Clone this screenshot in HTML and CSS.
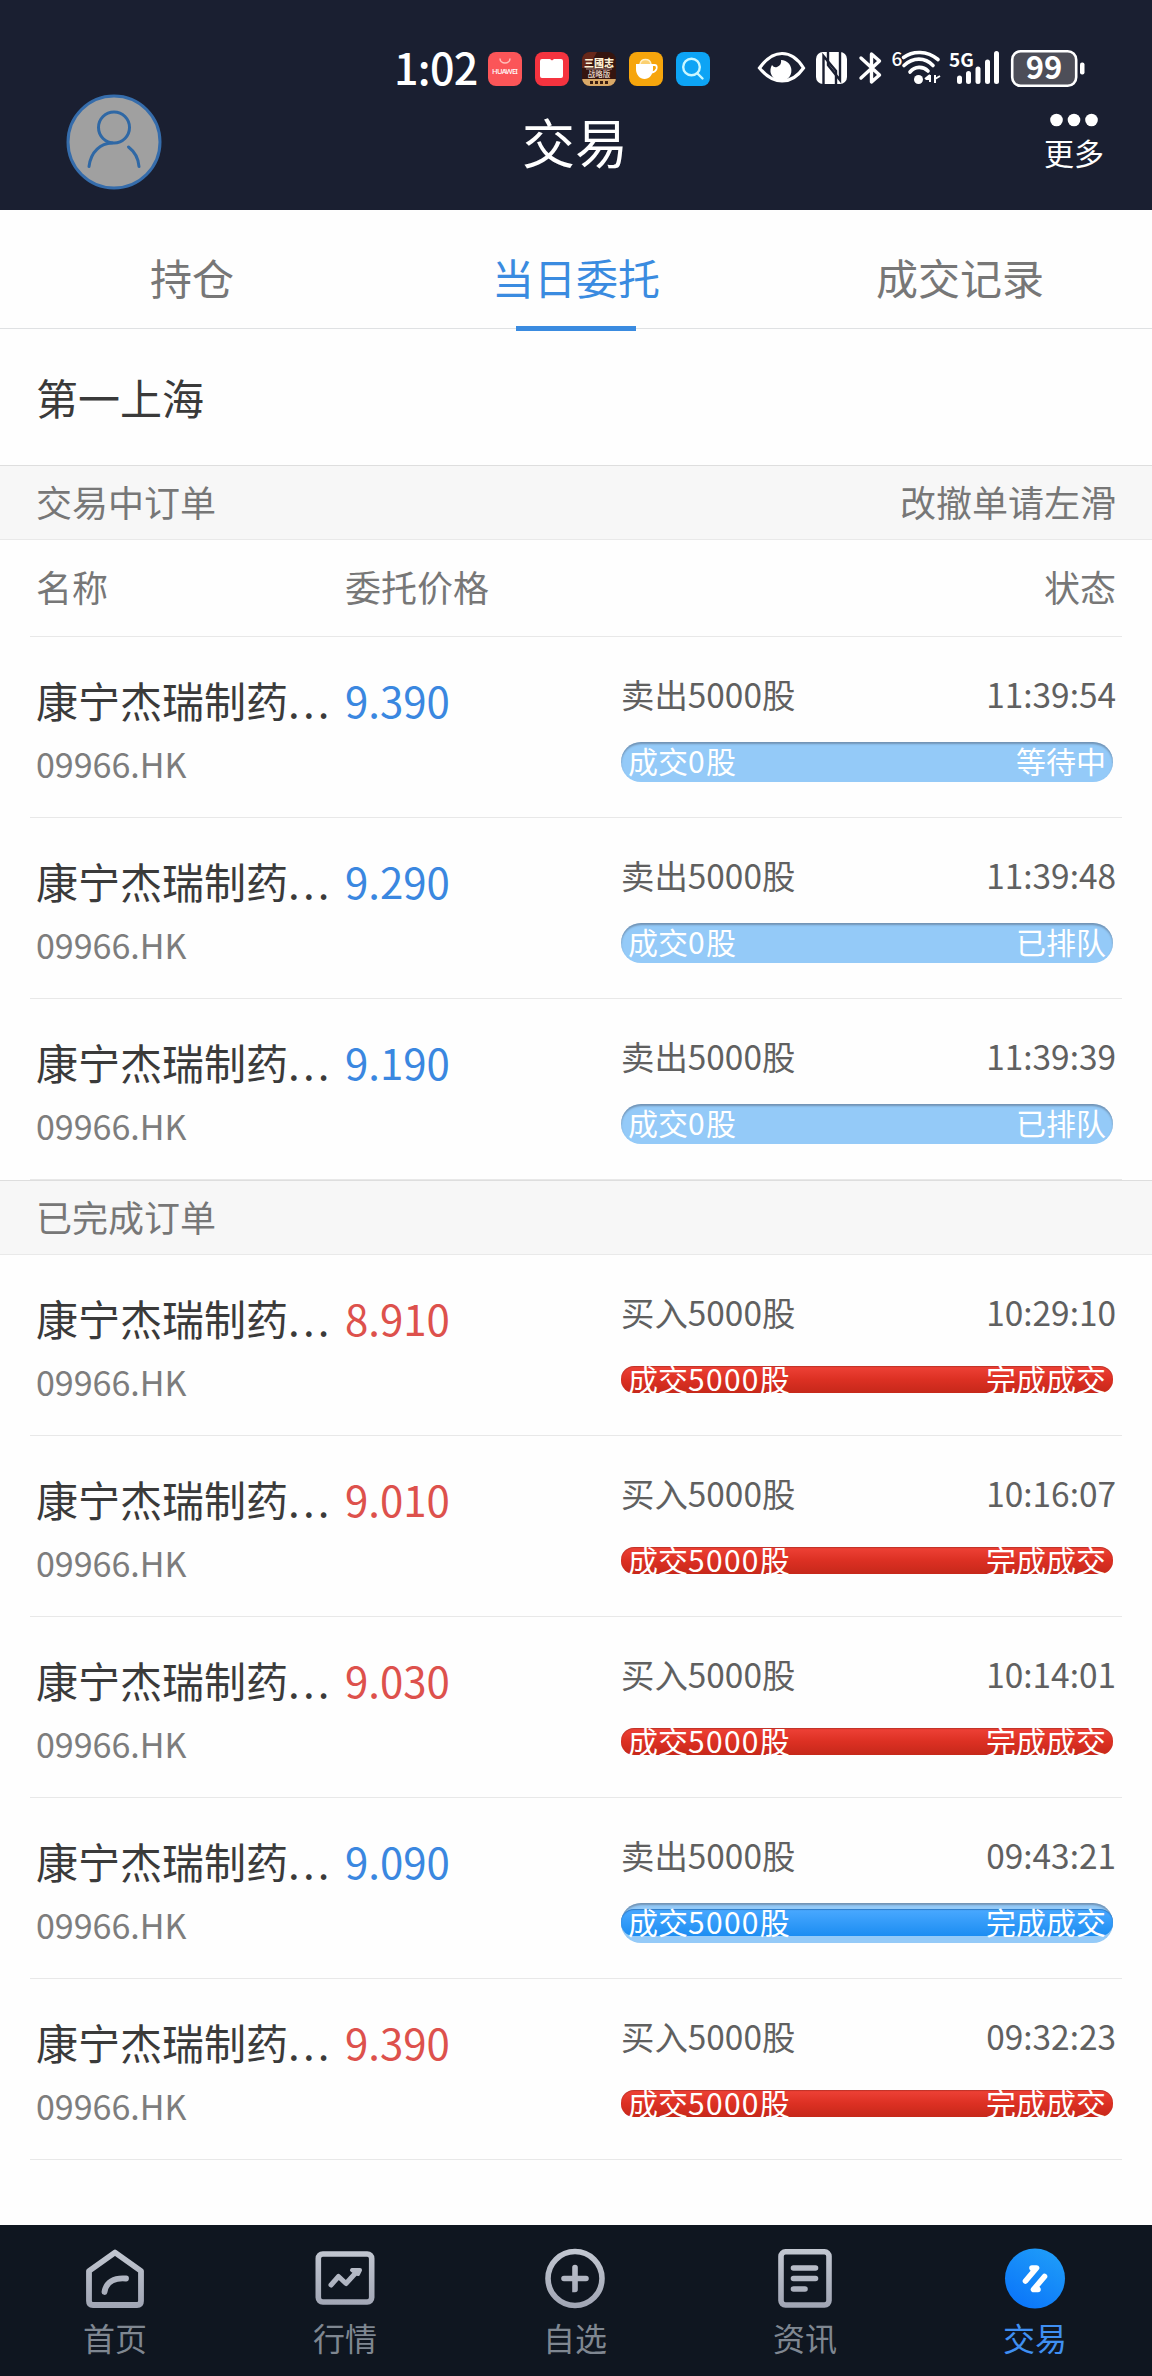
FILE: index.html
```html
<!DOCTYPE html>
<html lang="zh-CN">

<head>
	<meta charset="UTF-8" />
	<title>交易</title>
	<link rel="stylesheet" href="styles.css">
</head>

<body>
	<header class="top">
		<div class="status-bar">
			<span class="clock">1:02</span>
			<div class="app-icons">
				<svg viewBox="0 0 34 34">
					<rect width="34" height="34" rx="8" fill="#fb5558" />
					<path d="M12 6.500a5 4.500 0 0 0 10 0" fill="none" stroke="#ffc0bc" stroke-width="1.500" />
					<text x="17" y="21.500" text-anchor="middle" textLength="26" class="t-huawei">HUAWEI</text>
				</svg>
				<svg viewBox="0 0 34 34">
					<rect width="34" height="34" rx="8" fill="#f5333f" />
					<path d="M5 9q0-2 2-2h8l2 1.500 2-1.500h7q2 0 2 2v15q0 2-2 2H7q-2 0-2-2z" fill="#fff" />
				</svg>
				<svg viewBox="0 0 34 34">
					<defs>
						<clipPath id="gameClip"><rect width="34" height="34" rx="8" /></clipPath>
					</defs>
					<g clip-path="url(#gameClip)">
						<rect width="34" height="34" fill="#35150f" />
						<path d="M0 0h15L6 16H0z" fill="#68281a" />
						<rect y="27" width="34" height="7" fill="#d9a968" />
						<path d="M4 17h26" stroke="#b99" stroke-width="0.800" />
						<path d="M8 30.500h3m2 0h3m2 0h3m2 0h3" stroke="#3a1c10" stroke-width="3" />
					</g>
					<text x="17" y="14.500" text-anchor="middle" class="t-game">三國志</text>
					<text x="17" y="25" text-anchor="middle" class="t-game-sub">战略版</text>
				</svg>
				<svg viewBox="0 0 34 34">
					<rect width="34" height="34" rx="8" fill="#f6a50c" />
					<path d="M11 12c1-6 10-6 11 0" fill="#fbd070" stroke="#fff0c8" stroke-width="1.500" />
					<path d="M7 12h17v5c0 6-4 10-8.500 10S7 23 7 17z" fill="#fff" />
					<path d="M23 13h2.500q3 0 2 4-1 3-5 3.500" fill="none" stroke="#fff" stroke-width="1.800" />
				</svg>
				<svg viewBox="0 0 34 34">
					<rect width="34" height="34" rx="8" fill="#0da4f5" />
					<g fill="none" stroke="#c9f7ff" stroke-width="2.400" stroke-linecap="round">
						<circle cx="15.500" cy="15" r="8.300" />
						<path d="M21.500 21.500L26.500 26.500" />
					</g>
				</svg>
			</div>
			<!-- eye, nfc, bluetooth, wifi, signal, battery -->
			<svg class="sys-icons" viewBox="0 0 328 40" width="328" height="40">
				<path d="M2.500 20C9 11 16 5.500 25 5.500S41 11 46.500 20C41 28 34 33 25 33S9 28 2.500 20z" fill="none" stroke="#fff" stroke-width="3.200" />
				<path d="M24 12a10.500 10.500 0 1 1-9 5q2 3 5 2 5-2 4-7z" fill="#fff" />
				<rect x="59" y="4" width="31" height="32" rx="7" fill="#fff" />
				<g fill="none" stroke="#1a1f31" stroke-width="2.400">
					<path d="M66.500 36V8L79 23V36" />
					<path d="M83 4V32L71 17V4" />
				</g>
				<path d="M104 10L122.500 27L114.500 34V6L122.500 13L104 30" fill="none" stroke="#fff" stroke-width="3.400" stroke-linejoin="round" stroke-linecap="round" />
				<text x="134.500" y="18" class="t-six">6</text>
				<g fill="none" stroke="#fff" stroke-width="3.600" stroke-linecap="round">
					<path d="M146.500 9.500C156 2.500 170 2.500 181 11.500" />
					<path d="M147 17.500C156 9 168 9 176 17.500" />
					<path d="M153 24C158 18 166 18 171 23" />
				</g>
				<circle cx="161.500" cy="31.500" r="4.500" fill="#fff" />
				<path d="M173 27v7M168 31l5-4M169 31h4M178 27v8M178 31l5-3" stroke="#fff" stroke-width="2" />
				<text x="192" y="19" class="t-5g">5G</text>
				<g stroke="#fff" stroke-width="5" stroke-linecap="round">
					<path d="M202.500 30V33.500" />
					<path d="M211.500 25.500V33.500" />
					<path d="M221 21V33.500" />
					<path d="M230.500 14V33.500" />
					<path d="M239.500 5.500V33.500" />
				</g>
				<rect x="255.200" y="3.200" width="64" height="34.600" rx="8.500" fill="#4d4e58" stroke="#fff" stroke-width="2.600" />
				<text x="287" y="31" text-anchor="middle" class="t-battery">99</text>
				<rect x="323" y="14.500" width="4.500" height="12" rx="2" fill="#fff" />
			</svg>
		</div>

		<div class="title-bar">
			<svg class="avatar" viewBox="0 0 96 96">
				<circle cx="48" cy="48" r="46" fill="#a0a0a0" stroke="#356cab" stroke-width="3" />
				<g fill="none" stroke="#2f68a5" stroke-width="3" stroke-linecap="round">
					<circle cx="48" cy="33.500" r="15.500" />
					<path d="M23 72.500C25 57 35 49.500 46 49" />
					<path d="M62.500 53C69 58 72.500 65 73 72.500" />
				</g>
			</svg>
			<h1 class="title">交易</h1>
			<div class="more">
				<svg viewBox="0 0 50 14" width="50" height="14" fill="#fff">
					<circle cx="7.500" cy="7" r="6.300" />
					<circle cx="25" cy="7" r="6.300" />
					<circle cx="42.500" cy="7" r="6.300" />
				</svg>
				<span>更多</span>
			</div>
		</div>
	</header>

	<nav class="tabs">
		<a class="tab">持仓</a>
		<a class="tab active">当日委托</a>
		<a class="tab">成交记录</a>
	</nav>

	<main class="content">
		<div class="broker">第一上海</div>

		<div class="section-head">
			<span>交易中订单</span>
			<span>改撤单请左滑</span>
		</div>
		<div class="list">
			<div class="list-head">
				<span>名称</span>
				<span>委托价格</span>
				<span class="right">状态</span>
			</div>
			<div class="order sell">
				<div class="stock">
					<div class="name">康宁杰瑞制药<span class="dots">...</span></div>
					<div class="code">09966.HK</div>
				</div>
				<div class="price">9.390</div>
				<div class="detail">
					<div class="line"><span>卖出5000股</span><span>11:39:54</span></div>
					<div class="bar"><div class="bar-text"><span>成交<i>0</i>股</span><span>等待中</span></div></div>
				</div>
			</div>
			<div class="order sell">
				<div class="stock">
					<div class="name">康宁杰瑞制药<span class="dots">...</span></div>
					<div class="code">09966.HK</div>
				</div>
				<div class="price">9.290</div>
				<div class="detail">
					<div class="line"><span>卖出5000股</span><span>11:39:48</span></div>
					<div class="bar"><div class="bar-text"><span>成交<i>0</i>股</span><span>已排队</span></div></div>
				</div>
			</div>
			<div class="order sell">
				<div class="stock">
					<div class="name">康宁杰瑞制药<span class="dots">...</span></div>
					<div class="code">09966.HK</div>
				</div>
				<div class="price">9.190</div>
				<div class="detail">
					<div class="line"><span>卖出5000股</span><span>11:39:39</span></div>
					<div class="bar"><div class="bar-text"><span>成交<i>0</i>股</span><span>已排队</span></div></div>
				</div>
			</div>
		</div>

		<div class="section-head">
			<span>已完成订单</span>
		</div>
		<div class="list">
			<div class="order buy done">
				<div class="stock">
					<div class="name">康宁杰瑞制药<span class="dots">...</span></div>
					<div class="code">09966.HK</div>
				</div>
				<div class="price">8.910</div>
				<div class="detail">
					<div class="line"><span>买入5000股</span><span>10:29:10</span></div>
					<div class="bar"><div class="bar-text"><span>成交<i>5000</i>股</span><span>完成成交</span></div></div>
				</div>
			</div>
			<div class="order buy done">
				<div class="stock">
					<div class="name">康宁杰瑞制药<span class="dots">...</span></div>
					<div class="code">09966.HK</div>
				</div>
				<div class="price">9.010</div>
				<div class="detail">
					<div class="line"><span>买入5000股</span><span>10:16:07</span></div>
					<div class="bar"><div class="bar-text"><span>成交<i>5000</i>股</span><span>完成成交</span></div></div>
				</div>
			</div>
			<div class="order buy done">
				<div class="stock">
					<div class="name">康宁杰瑞制药<span class="dots">...</span></div>
					<div class="code">09966.HK</div>
				</div>
				<div class="price">9.030</div>
				<div class="detail">
					<div class="line"><span>买入5000股</span><span>10:14:01</span></div>
					<div class="bar"><div class="bar-text"><span>成交<i>5000</i>股</span><span>完成成交</span></div></div>
				</div>
			</div>
			<div class="order sell done">
				<div class="stock">
					<div class="name">康宁杰瑞制药<span class="dots">...</span></div>
					<div class="code">09966.HK</div>
				</div>
				<div class="price">9.090</div>
				<div class="detail">
					<div class="line"><span>卖出5000股</span><span>09:43:21</span></div>
					<div class="bar"><div class="bar-text"><span>成交<i>5000</i>股</span><span>完成成交</span></div></div>
				</div>
			</div>
			<div class="order buy done">
				<div class="stock">
					<div class="name">康宁杰瑞制药<span class="dots">...</span></div>
					<div class="code">09966.HK</div>
				</div>
				<div class="price">9.390</div>
				<div class="detail">
					<div class="line"><span>买入5000股</span><span>09:32:23</span></div>
					<div class="bar"><div class="bar-text"><span>成交<i>5000</i>股</span><span>完成成交</span></div></div>
				</div>
			</div>
		</div>
	</main>

	<nav class="bottom-nav">
		<a class="nav-item">
			<svg viewBox="0 0 60 60">
				<defs>
					<linearGradient id="grayGrad" x1="0" y1="0" x2="0" y2="60" gradientUnits="userSpaceOnUse">
						<stop offset="0" stop-color="#c3c8d2" />
						<stop offset="1" stop-color="#a0a5b4" />
					</linearGradient>
				</defs>
				<g fill="none" stroke="url(#grayGrad)" stroke-width="5.800" stroke-linejoin="round" stroke-linecap="round">
					<path d="M30 4.500L56 23V53Q56 57 52 57H8Q4 57 4 53V23z" />
					<path d="M19.500 44C21 34 29 29.500 41 30.500" />
				</g>
			</svg>
			<span>首页</span>
		</a>
		<a class="nav-item">
			<svg viewBox="0 0 60 60">
				<g fill="none" stroke="url(#grayGrad)" stroke-width="5.600" stroke-linejoin="round" stroke-linecap="round">
					<rect x="3.300" y="6" width="53.400" height="48" rx="4.500" />
					<path d="M16 37L23.500 28.500L31 35.500L42 23.500" stroke-width="5" />
					<path d="M37 22H45L43 26z" stroke-width="4" />
				</g>
			</svg>
			<span>行情</span>
		</a>
		<a class="nav-item">
			<svg viewBox="0 0 60 60">
				<g fill="none" stroke="url(#grayGrad)" stroke-width="5.600" stroke-linecap="round">
					<circle cx="30" cy="30.500" r="27" />
					<path d="M19 30.500H41M30 19.500V41.500L30.010 41.500" />
				</g>
			</svg>
			<span>自选</span>
		</a>
		<a class="nav-item">
			<svg viewBox="0 0 60 60">
				<g fill="none" stroke="url(#grayGrad)" stroke-width="5.600" stroke-linecap="round">
					<rect x="6" y="3.800" width="48" height="53.200" rx="4.500" />
					<path d="M18.500 20.010L40.500 19.990M18.500 30.510L40.500 30.490M18.500 41.010L30 40.990" />
				</g>
			</svg>
			<span>资讯</span>
		</a>
		<a class="nav-item active">
			<svg viewBox="0 0 60 60">
				<defs>
					<linearGradient id="blueGrad" x1="0.800" y1="0" x2="0.200" y2="1">
						<stop offset="0" stop-color="#1f9df8" />
						<stop offset="1" stop-color="#0a74fa" />
					</linearGradient>
				</defs>
				<circle cx="30" cy="30.500" r="30" fill="url(#blueGrad)" />
				<g fill="none" stroke="#fff" stroke-width="5.600" stroke-linecap="round" stroke-linejoin="round">
					<path d="M20.500 33L31.500 20H27L29 22.500" />
					<path d="M39.500 28.500L28.500 41.500H33L31 39" />
				</g>
			</svg>
			<span>交易</span>
		</a>
	</nav>
</body>

</html>
```

FILE: styles.css
```css
* {
	box-sizing: border-box;
}

body {
	margin: 0;
	width: 1152px;
	height: 2376px;
	display: flex;
	flex-direction: column;
	background: #fefefe;
	color: #3a3a3a;
	font-family: "Noto Sans CJK SC", sans-serif;
}

svg {
	display: block;
	overflow: visible;
}

/* header */
.top {
	height: 210px;
	background: #1a1f31;
	color: #fff;
}

.status-bar {
	height: 94px;
	padding: 48px 0 0 394px;
	display: flex;
	align-items: center;
}

.clock {
	width: 94px;
	margin-top: -10px;
	font-size: 43px;
	font-weight: 500;
	line-height: 40px;
	letter-spacing: -0.7px;
}

.app-icons {
	display: flex;
	gap: 13px;
	margin-top: -5px;
}

.app-icons svg {
	width: 34px;
	height: 34px;
}

.sys-icons {
	margin-left: 47px;
	margin-top: -6px;
}

.sys-icons text {
	fill: #fff;
}

.t-huawei {
	font: 500 7.5px "Noto Sans", sans-serif;
	fill: #fff;
}

.t-game {
	font: 900 10px "Noto Sans CJK SC", sans-serif;
	fill: #fff2d5;
}

.t-game-sub {
	font: 500 7.5px "Noto Sans CJK SC", sans-serif;
	fill: #e8d8c8;
}

.t-six {
	font: 500 19px "Noto Sans CJK SC", sans-serif;
}

.t-5g {
	font: 700 19px "Noto Sans CJK SC", sans-serif;
}

.t-battery {
	font: 700 31px "Noto Sans CJK SC", sans-serif;
}

.title-bar {
	height: 96px;
	padding: 0 48px 0 66px;
	display: grid;
	grid-template-columns: 1fr 104px 1fr;
	align-items: center;
}

.avatar {
	width: 96px;
	height: 96px;
}

.title {
	margin: 0;
	margin-left: -11px;
	margin-top: -3px;
	font-size: 53px;
	font-weight: 400;
	line-height: 60px;
	white-space: nowrap;
}

.more {
	justify-self: end;
	margin-top: -5px;
	display: flex;
	flex-direction: column;
	align-items: center;
	gap: 10px;
	font-size: 30px;
	line-height: 30px;
}

/* tabs */
.tabs {
	height: 119px;
	display: flex;
	border-bottom: 1px solid #dfe1e3;
}

.tab {
	flex: 1;
	position: relative;
	text-align: center;
	font-size: 42px;
	line-height: 134px;
	color: #777;
}

.tab.active {
	color: #3a8be0;
}

.tab.active::after {
	content: "";
	position: absolute;
	left: 132px;
	bottom: -3px;
	width: 120px;
	height: 5px;
	background: #3a8be0;
}

/* orders */
.content {
	flex: 1;
}

.broker {
	height: 136px;
	padding-left: 36px;
	font-size: 42px;
	line-height: 136px;
}

.section-head {
	height: 75px;
	padding: 0 36px;
	display: flex;
	justify-content: space-between;
	background: #f7f7f7;
	border-top: 1px solid #dedede;
	border-bottom: 1px solid #e9e9e9;
	font-size: 36px;
	line-height: 71px;
	color: #777;
}

.list {
	padding: 0 30px;
}

.list-head,
.order {
	display: grid;
	grid-template-columns: 309px 276px 1fr;
	padding: 0 6px;
	border-bottom: 1px solid #e8e8e8;
}

.list-head {
	height: 97px;
	font-size: 36px;
	line-height: 92px;
	color: #777;
}

.right {
	text-align: right;
}

.order {
	height: 181px;
}

.name {
	margin-top: 42px;
	font-size: 42px;
	line-height: 42px;
	white-space: nowrap;
}

.dots {
	letter-spacing: 3.2px;
}

.code {
	margin-top: 26px;
	font-size: 34px;
	line-height: 34px;
	color: #7d7d7d;
}

.price {
	margin-top: 42px;
	font-size: 42px;
	line-height: 42px;
}

.sell .price {
	color: #3a87e0;
}

.buy .price {
	color: #dd514c;
}

.line {
	margin-top: 40px;
	display: flex;
	justify-content: space-between;
	font-size: 33.4px;
	line-height: 34px;
	color: #606060;
}

.bar {
	width: 492px;
	height: 40px;
	margin-top: 31px;
	padding: 6px 0 7px;
	border-radius: 20px;
}

.sell .bar {
	background: #94caf8;
	box-shadow: inset 0 2px 2px rgba(90, 110, 135, 0.6);
}

.bar-text {
	height: 27px;
	padding: 0 7px;
	display: flex;
	justify-content: space-between;
	border-radius: 13px;
	font-size: 30px;
	line-height: 25px;
	color: #fff;
}

.bar-text i {
	font-style: normal;
	letter-spacing: 1.3px;
}

.done .bar-text {
	background: linear-gradient(#ef4237, #dc3023 50%, #c6281a);
	box-shadow: inset 0 1px 1px rgba(120, 30, 20, 0.4);
}

.sell.done .bar-text {
	background: linear-gradient(#4aa9ff, #1c8df2);
	box-shadow: inset 0 1px 1px rgba(20, 80, 150, 0.5);
}

/* bottom nav */
.bottom-nav {
	height: 151px;
	padding: 23px 2px 0 0;
	display: flex;
	background: #0f1620;
}

.nav-item {
	flex: 1;
	display: flex;
	flex-direction: column;
	align-items: center;
	font-size: 32px;
	line-height: 32px;
	color: #7f8791;
}

.nav-item svg {
	width: 60px;
	height: 60px;
	margin-bottom: 13px;
}

.nav-item.active {
	color: #3f8ff2;
}
```
